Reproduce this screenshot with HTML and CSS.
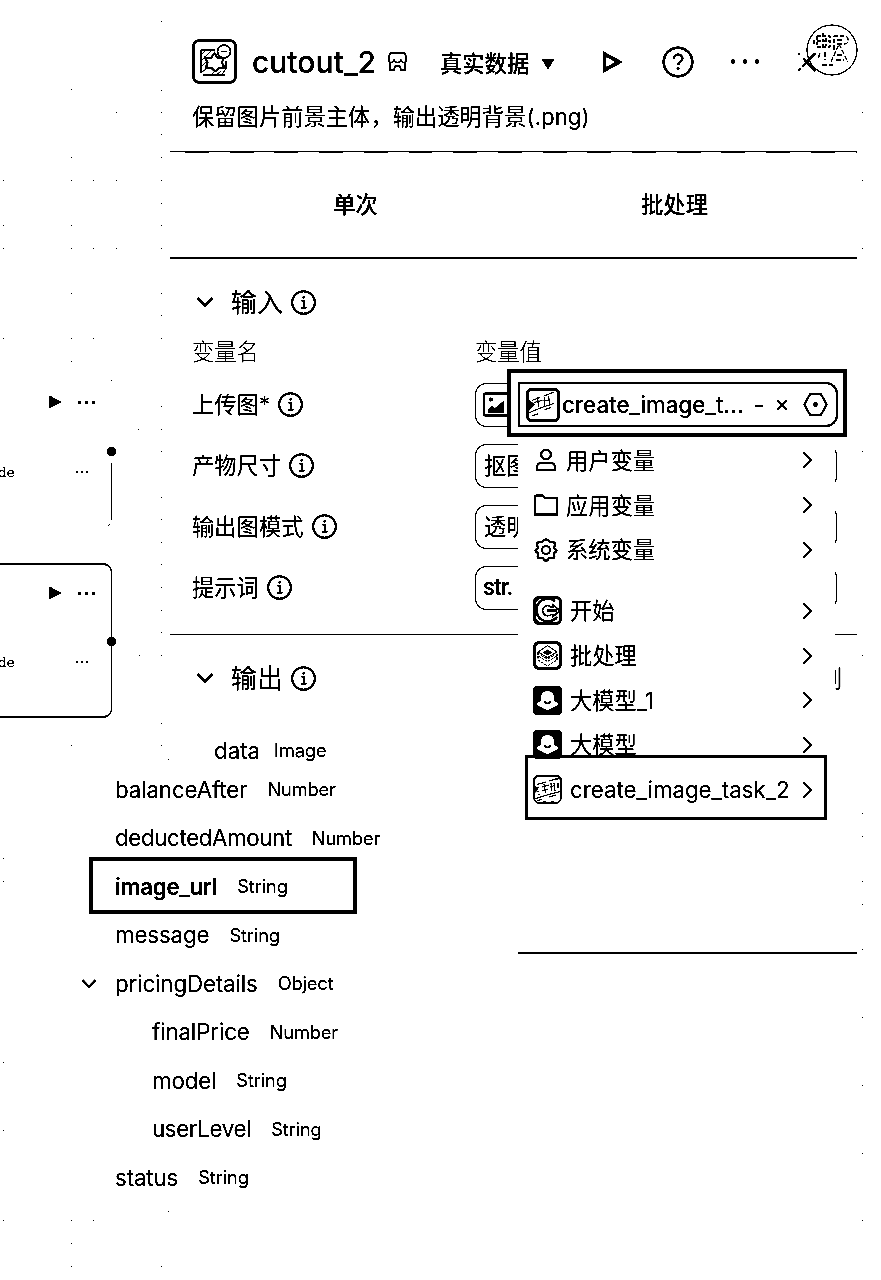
FILE: index.html
```html
<!DOCTYPE html>
<html lang="zh-CN">
<head>
<meta charset="utf-8">
<title>cutout_2</title>
<link rel="stylesheet" href="styles.css">
</head>
<body>
<svg class="defs" width="0" height="0">
  <defs>
    <symbol id="info" viewBox="0 0 24 24"><circle cx="12" cy="12" r="10.9" fill="none" stroke="#000" stroke-width="1.900"/><path d="M9.900 10.400h2.400v6.200M9.600 16.900h5.400" fill="none" stroke="#000" stroke-width="1.500"/><circle cx="12.100" cy="6.900" r="1.200"/></symbol>
    <symbol id="right" viewBox="0 0 10 18"><path d="M1 1.200 8.600 9 1 16.800" fill="none" stroke="#000" stroke-width="1.800"/></symbol>
    <symbol id="down" viewBox="0 0 18 12"><path d="M1.500 2 9 9.600 16.500 2" fill="none" stroke="#000" stroke-width="2.600"/></symbol>
    <symbol id="play" viewBox="0 0 13 14"><path d="M.5.5 12.500 7 .5 13z"/></symbol>
    <symbol id="model" viewBox="0 0 29 29"><rect width="29" height="29" rx="4.500"/><path d="M14.500 5c4.200 0 6.500 3.200 6.500 6.500v3.500c1.700.6 4 1.300 4 3 0 1.800-2.300 3.200-4.500 2.500-.9 2-2.600 2.600-4 2.300-.8 1.600-3.200 1.600-4 0-1.800.3-3.300-.6-4-2.300-2.300.7-4.500-.8-4.500-2.500 0-1.700 2.300-2.400 4-3v-3.500c0-3.300 2.300-6.500 6.500-6.500z" fill="#fff"/><path d="M11.500 15c.8 3.200 5.200 3.200 6 0" fill="none" stroke="#000" stroke-width="1.500"/></symbol>
    <symbol id="task" viewBox="0 0 29 29"><rect x="1" y="1" width="27" height="27" rx="5" fill="#fff" stroke="#000" stroke-width="1.300"/><path d="M1 8V6a5 5 0 0 1 5-5h17a5 5 0 0 1 5 5" fill="none" stroke="#000" stroke-width="2.200"/><path d="M4 9.500 13 7m3-1 10-3M2 23.800 14 20l13-3.500M4 26l5-2M11 9l1.500 9M9 12l7-2M9 16l6-2M18 8l.6 8M17.500 12l5-2M21 8l1 8M3 13l3-1M3.500 17l3-1M5 20l2-1M25 8v5M16 22l7-2M22 5l3-1" fill="none" stroke="#000" stroke-width="1"/><path d="M2 11l3 3-3 4zM10 26h3v1h-3zM18 26h3v1h-3z"/></symbol>
  </defs>
</svg>

<main class="stage">
  <svg class="grid" width="881" height="1280"><path stroke="#000" stroke-width="1" d="M161 21.500h1M71 89.500h1M161 90.500h1M116 112.500h1M161 112.500h1M161 134.500h1M71 157.500h1M161 157.500h1M3 180.500h1M71 180.500h1M93 180.500h1M116 180.500h1M161 180.500h1M161 203.500h1M3 225.500h1M71 225.500h1M161 225.500h1M3 248.500h1M71 248.500h1M93 248.500h1M116 248.500h1M161 248.500h1M71 293.500h1M161 293.500h1M161 315.500h1M3 338.500h1M71 338.500h1M93 338.500h1M161 338.500h1M71 361.500h1M111 380.500h1M161 406.500h1M138 429.500h1M161 429.500h1M161 451.500h1M161 497.500h1M161 519.500h1M161 542.500h1M161 564.500h1M161 587.500h1M161 610.500h1M161 632.500h1M139 655.500h1M161 655.500h1M161 723.500h1M71 745.500h1M161 745.500h1M168 759.500h1M862 112.500h1M862 180.500h1M862 248.500h1M862 451.500h1M862 655.500h1M862 813.500h1M862 836.500h1M862 881.500h1M862 904.500h1M862 949.500h1M862 1017.500h1M862 1085.500h1M862 1153.500h1M862 1220.500h1M3 858.500h1M3 881.500h1M3 1062.500h1M3 1130.500h1M3 1220.500h1M168 1211.500h1M71 1220.500h1M93 1220.500h1M71 1243.500h1M71 1266.500h1M161 1266.500h1M108 525.500h1M109 524.500h1"/></svg>

  <section class="node node-plain">
    <div class="node-head"><svg class="play"><use href="#play"/></svg><i class="dots"><b></b><b></b><b></b></i></div>
    <div class="node-row"><span>de</span><i class="dots small"><b></b><b></b><b></b></i></div>
    <span class="port"></span>
    <span class="edge"></span>
  </section>
  <section class="node node-active">
    <div class="node-head"><svg class="play"><use href="#play"/></svg><i class="dots"><b></b><b></b><b></b></i></div>
    <div class="node-row"><span>de</span><i class="dots small"><b></b><b></b><b></b></i></div>
    <span class="port"></span>
  </section>

  <section class="panel">
    <header class="head">
      <svg class="app" viewBox="0 0 45 45"><rect x="1.500" y="1.500" width="42" height="42" rx="6" fill="#fff" stroke="#000" stroke-width="2.600"/><path d="M9 34V11h14M9 34l6-5M9 28l6-6M9 22l11-11M9 16l4-4M18 37l4-4M23 37l6-5M29 36l6-7M34 22v8M11 36h22" fill="none" stroke="#000" stroke-width=".9"/><path d="m22.500 14 3 5 6-1-1.500 6 2.500 4.500-5.500.5-4 3.500-3.500-3.500-5.500-.500 1.500-5-2.500-5 6 .500z" fill="#fff" stroke="#000" stroke-width="1.900"/><circle cx="32" cy="12.500" r="6.500" fill="#fff" stroke="#000" stroke-width="1.500"/><path d="M29.500 12.500h5" stroke="#000"/></svg>
      <h1>cutout_2</h1>
      <svg class="shop" viewBox="0 0 20 20"><path d="M3 1.200h14l1.800 4v3c0 1.600-1 2.300-2.300 2.300S14 9.600 13.500 8.500C13 9.700 11.500 10.500 10 10.500S7 9.700 6.500 8.500C6 9.600 4.800 10.500 3.500 10.500S1.200 9.800 1.200 8.200v-3zM2.500 11v7.300h4l1-4h5l1 4h4V11" fill="none" stroke="#000" stroke-width="1.600"/></svg>
      <span class="source">真实数据</span>
      <svg class="caret" viewBox="0 0 14 12"><path d="M.5.8h13L7 11.500z"/></svg>
      <svg class="run" viewBox="0 0 20 22"><path d="M2.500 3 17 11 2.500 19z" fill="none" stroke="#000" stroke-width="3.600"/></svg>
      <svg class="help" viewBox="0 0 32 32"><circle cx="16" cy="16" r="14.300" fill="none" stroke="#000" stroke-width="2.500"/><path d="M11.700 12.800c0-5.600 8.800-5.600 8.800-.3 0 3.300-4.400 3.500-4.400 6.800" fill="none" stroke="#000" stroke-width="2.200"/><circle cx="16" cy="22.700" r="1.500"/></svg>
      <i class="dots big"><b></b><b></b><b></b></i>
      <svg class="close" viewBox="0 0 20 20"><path d="M1.500 18.500 19 1" fill="none" stroke="#000" stroke-width="1.600" stroke-dasharray="3.500 2 20"/><path d="M1.500 1.500l1 1M6 6l4 4" stroke="#000" stroke-width="1.500"/><path d="M8 8.500 18.500 19M11 8.500l7.500-7" stroke="#000" stroke-width="2.600"/></svg>
    </header>
    <p class="desc">保留图片前景主体，输出透明背景(.png)</p>
    <nav class="tabs"><span>单次</span><span>批处理</span></nav>

    <div class="block">
      <h2><svg class="fold"><use href="#down"/></svg><span>输入</span><svg class="info"><use href="#info"/></svg></h2>
      <div class="cols"><span>变量名</span><span>变量值</span></div>
      <div class="row"><label><span>上传图*</span><svg class="info"><use href="#info"/></svg></label><div class="field"><svg class="pic" viewBox="0 0 27 25"><rect x="1" y="1.500" width="25" height="22" rx="1" fill="none" stroke="#000" stroke-width="2"/><circle cx="7.800" cy="7.500" r="2.100"/><path d="M5 20.500V18l4-4 3 2 9-7.500v12z"/></svg></div></div>
      <div class="row"><label><span>产物尺寸</span><svg class="info"><use href="#info"/></svg></label><div class="field"><span>抠图</span></div></div>
      <div class="row"><label><span>输出图模式</span><svg class="info"><use href="#info"/></svg></label><div class="field"><span>透明</span></div></div>
      <div class="row"><label><span>提示词</span><svg class="info"><use href="#info"/></svg></label><div class="field str">str.</div></div>
    </div>

    <div class="block out">
      <h2><svg class="fold"><use href="#down"/></svg><span>输出</span><svg class="info"><use href="#info"/></svg><span class="tail">列</span></h2>
      <div class="data"><span>data</span><em>Image</em></div>
    </div>
  </section>

  <svg class="avatar" viewBox="0 0 52 52"><circle cx="26" cy="26" r="25" fill="none" stroke="#000" stroke-width="1.100"/><path d="M11 12h13v11H11zM11 17h13M17 9v17M20 14v8M8 16v6" fill="none" stroke="#000" stroke-width="1.100" stroke-dasharray="4 1.500"/><path d="M28 26V12h11c4 0 4 8 0 8h-8M31 16h7M25 38l8-18 9 18M31 31h6M30 36h8M14 29l-2 6M19 28v8M16 41h12" fill="none" stroke="#000" stroke-width="1.100" stroke-dasharray="5 1.500"/></svg>

  <aside class="tree">
    <div><span>balanceAfter</span><em>Number</em></div>
    <div><span class="tight">deductedAmount</span><em>Number</em></div>
    <div class="picked"><span>image_url</span><em>String</em></div>
    <div><span>message</span><em>String</em></div>
    <div class="parent"><svg class="fold"><use href="#down"/></svg><span>pricingDetails</span><em>Object</em></div>
    <div class="sub"><span>finalPrice</span><em>Number</em></div>
    <div class="sub"><span>model</span><em>String</em></div>
    <div class="sub"><span class="tight">userLevel</span><em>String</em></div>
    <div><span>status</span><em>String</em></div>
  </aside>

  <aside class="menu">
    <ul>
      <li><svg class="ic" viewBox="0 0 24 24"><circle cx="12" cy="6.500" r="4.800" fill="none" stroke="#000" stroke-width="2.100"/><path d="M3 22v-3c0-2.500 2-4 4-4h10c2 0 4 1.500 4 4v3z" fill="none" stroke="#000" stroke-width="2.100"/></svg><span>用户变量</span><svg class="go"><use href="#right"/></svg></li>
      <li><svg class="ic" viewBox="0 0 24 24"><path d="M1.200 21.500v-18q0-1 1-1h6.600l2.200 2.400h11q1 0 1 1v15.600z" fill="none" stroke="#000" stroke-width="2.100"/></svg><span>应用变量</span><svg class="go"><use href="#right"/></svg></li>
      <li><svg class="ic" viewBox="0 0 24 24"><path d="M12 1.200c1.700 0 2.700 2.300 4 2.800 1.500.6 4-.4 4.800 1 .9 1.500-.7 3.200-.7 4.700 0 1 2.500 1.500 2.500 2.800s-2.200 1.800-2.500 3c-.3 1.500 1.200 3-.2 4.200-1.200 1-3.200-.2-4.500.4-1.200.6-1.700 2.700-3.400 2.700s-2.200-2.100-3.400-2.700c-1.300-.6-3.300.6-4.500-.4-1.400-1.200.1-2.700-.2-4.200-.3-1.200-2.500-1.700-2.500-3s2.500-1.800 2.500-2.800c0-1.500-1.600-3.200-.7-4.700.8-1.400 3.300-.4 4.800-1 1.300-.5 2.300-2.800 4-2.800z" fill="none" stroke="#000" stroke-width="2"/><circle cx="12" cy="12" r="4" fill="none" stroke="#000" stroke-width="2"/></svg><span>系统变量</span><svg class="go"><use href="#right"/></svg></li>
    </ul>
    <ul class="nodes">
      <li><svg class="ic" viewBox="0 0 29 29"><rect x="1.500" y="1.500" width="26" height="26" rx="4.500" fill="#fff" stroke="#000" stroke-width="3"/><path d="M22 5a11.500 11.500 0 1 0 2 16" fill="none" stroke="#000" stroke-width="2.400"/><path d="M18 11a5 5 0 1 0 0 7.500h2v2l7-5.800L20 9v2z" fill="#fff" stroke="#000" stroke-width="1.600"/><path d="M14 13.500h10v2H14zM1 20l5 6H2zM2 3h4L2 8z"/></svg><span>开始</span><svg class="go"><use href="#right"/></svg></li>
      <li><svg class="ic" viewBox="0 0 29 29"><rect x="1.500" y="1.500" width="26" height="26" rx="5" fill="#fff" stroke="#000" stroke-width="3"/><path d="m14.500 4.500 9.500 6.500-9.500 5.500L5 11z" fill="none" stroke="#000" stroke-width="1"/><path d="m14.500 8.500 5 3-5 2.500-5-2.500z"/><path d="M5 11v8l9.500 6 9.500-6v-8M5 15l9.500 5.500L24 15M8 14.500l6.500 3.500 6.500-3.500" fill="none" stroke="#000" stroke-width=".9" stroke-dasharray="3 .8"/></svg><span>批处理</span><svg class="go"><use href="#right"/></svg></li>
      <li><svg class="ic"><use href="#model"/></svg><span>大模型_1</span><svg class="go"><use href="#right"/></svg></li>
      <li><svg class="ic"><use href="#model"/></svg><span>大模型</span><svg class="go"><use href="#right"/></svg></li>
      <li><svg class="ic"><use href="#task"/></svg><span class="lat">create_image_task_2</span><svg class="go"><use href="#right"/></svg></li>
    </ul>
  </aside>

  <div class="frame frame-value">
    <div class="value">
      <svg class="thumb" viewBox="0 0 33 33"><rect x="1.500" y="1.500" width="30" height="30" rx="4" fill="#fff" stroke="#000" stroke-width="3"/><rect x="6" y="3" width="22" height="27" rx="2" fill="#fff"/><path d="M6 12l8-3M17 8l10-4M3 24l12-5 12-4M11 9l1.500 10M8 14l8-2M18 9v8M17 12h6M22 8l1 9M6 27l6-2M18 21l6-2" fill="none" stroke="#000" stroke-width=".9"/><path d="M3 12l6 4-6 6z"/></svg>
      <span>create_image_t...</span><span class="dash">-</span>
      <svg class="x" viewBox="0 0 12 12"><path d="m1 1 10 10M11 1 1 11" stroke="#000" stroke-width="1.400"/></svg>
      <svg class="hex" viewBox="0 0 25 23"><path d="M7 1.200h11l5.700 10.300L18 21.800H7L1.300 11.500z" fill="none" stroke="#000" stroke-width="1.900" stroke-linejoin="round"/><circle cx="12.500" cy="11.500" r="2.200"/></svg>
    </div>
  </div>
  <div class="frame frame-menu"></div>
  <div class="frame frame-tree"></div>
</main>
</body>
</html>
```
FILE: styles.css
```css
* { box-sizing: border-box; }
body { margin: 0; background: #fff; color: #000; font: 22.3px "Inter", "Noto Sans CJK SC", sans-serif; }
svg { display: block; flex: none; }
h1, h2, p, ul { margin: 0; padding: 0; font-weight: 400; }
ul { list-style: none; }
em, i { font-style: normal; }
.defs { position: absolute; }
.stage { position: relative; width: 881px; height: 1280px; overflow: hidden; background: #fff; filter: brightness(.8) contrast(12); }
.grid { position: absolute; inset: 0; }

.dots { display: flex; gap: 4px; }
.dots b { width: 3px; height: 3px; border-radius: 50%; background: #000; }
.dots.small { gap: 3px; }
.dots.small b { width: 2px; height: 2px; }
.dots.big { gap: 7.500px; }
.dots.big b { width: 4.300px; height: 4.300px; }

.node { position: absolute; left: -20px; width: 132px; height: 155px; }
.node-plain { top: 372px; }
.node-active { top: 563px; border: solid #000; border-width: 2px 1px 2px 0; border-radius: 0 9px 9px 0; }
.node-head { display: flex; align-items: center; gap: 16px; height: 60px; padding-left: 69px; }
.node-active .node-head { height: 56px; }
.play { width: 13px; height: 14px; }
.node-row { display: flex; align-items: center; justify-content: space-between; height: 80px; padding: 0 24px 0 18px; font: 13.500px "DejaVu Serif", serif; }
.node-active .node-row { padding-right: 23px; height: 81px; }
.port { position: absolute; right: -4px; top: 75px; width: 9px; height: 9px; border-radius: 50%; background: #000; }
.node-active .port { right: -5px; top: 72px; }
.edge { position: absolute; right: 0; top: 91px; width: 1px; height: 57px; background: #000; }

.panel { position: absolute; left: 170px; top: 0; width: 687px; height: 954px; padding-top: 30px; border-bottom: 2px solid #000; }
.head { display: flex; align-items: center; height: 64px; padding-left: 22px; }
.app { width: 45px; height: 45px; margin-top: -2px; }
.head h1 { width: 150px; flex: none; padding-left: 15px; font-size: 30px; font-weight: 500; line-height: 60px; white-space: nowrap; }
.shop { width: 21px; height: 20px; }
.source { width: 101px; margin-left: 32px; font-weight: 500; white-space: nowrap; }
.caret { width: 14px; height: 12px; margin-top: 4px; }
.run { width: 20px; height: 22px; margin: -1px 0 0 47px; }
.help { width: 32px; height: 32px; margin: -1px 0 0 40px; }
.dots.big { margin: -1px 0 0 37px; }
.close { width: 20px; height: 20px; margin-left: 38px; }
.desc { height: 58px; padding-left: 22px; line-height: 46px; border-bottom: 1px solid #000; }
.tabs { display: grid; grid-template-columns: 371px 267px; align-items: center; height: 107px; padding-bottom: 4px; border-bottom: 2px solid #000; text-align: center; font-weight: 500; background: repeating-linear-gradient(90deg, #fff 0 15px, #000 15px 39px, #fff 39px 44.700px) 0 0 / 100% 1px no-repeat; }

.block { height: 376px; padding-top: 13px; border-bottom: 1px solid #000; }
.out { border: 0; height: auto; }
.block h2 { display: flex; align-items: center; height: 60px; padding-left: 26px; font-size: 26px; }
.block h2 span { margin-top: -3px; }
.fold { width: 18px; height: 12px; margin-right: 17px; }
.info { width: 25px; height: 25px; margin-left: 8px; }
.block h2 .tail { margin-left: auto; margin-right: 15px; font-size: 22.300px; }
.cols, .row { display: grid; grid-template-columns: 283px 362px; padding-left: 22px; }
.cols { height: 42px; line-height: 40px; font-weight: 300; }
.row { height: 61px; align-items: center; }
.row label { display: flex; align-items: center; }
.row label span, .field span { margin-top: -4px; }
.field { display: flex; align-items: center; height: 44px; padding-left: 8px; border: 1px solid #000; border-radius: 11px; }
.field.str { padding-left: 7px; font: 500 23px "Roboto", sans-serif; letter-spacing: -.8px; }
.pic { width: 27px; height: 25px; margin-left: -1px; }
.data { display: flex; align-items: center; height: 84px; padding-left: 44px; gap: 14px; }
.data em, .tree em { font-size: 18.200px; letter-spacing: -.1px; }

.avatar { position: absolute; left: 806px; top: 24px; width: 52px; height: 52px; }

.tree { position: absolute; left: 72px; top: 765px; width: 446px; height: 445px; background: #fff; }
.tree div { display: flex; align-items: center; height: 48.500px; padding-left: 43px; gap: 20px; white-space: nowrap; letter-spacing: -.12px; }
.tree .tight { letter-spacing: -.36px; }
.tree .sub { padding-left: 80px; }
.tree .parent { padding-left: 9px; }
.tree .fold { width: 16px; height: 11px; margin-right: -2px; }
.tree .picked span { font-weight: 600; letter-spacing: -.3px; }

.menu { position: absolute; left: 518px; top: 438px; width: 317px; height: 380px; background: #fff; }
.menu li { display: flex; align-items: center; height: 44.700px; padding: 0 22px 0 16px; white-space: nowrap; }
.menu span { flex: 1; padding: 0 0 3px 8px; }
.menu .lat { padding-bottom: 0; }
.menu .ic { width: 24px; height: 24px; }
.nodes { margin-top: 16.500px; }
.menu .nodes li { padding-left: 15px; }
.menu .nodes .ic { width: 29px; height: 29px; }
.go { width: 11px; height: 18px; }

.frame { position: absolute; border: 3.500px solid #000; }
.frame-value { left: 507px; top: 369px; width: 340px; height: 68px; padding: 9px 5px 6px 7px; border-width: 4px; background: #fff; }
.value { display: flex; align-items: center; height: 45px; padding-left: 6px; border: 2px solid #000; border-radius: 0 12px 12px 0; white-space: nowrap; }
.thumb { width: 34px; height: 34px; margin-right: 2px; }
.value span { width: 192px; font-weight: 500; }
.value .dash { width: 22px; }
.x { width: 12px; height: 12px; margin-right: 15px; }
.hex { width: 25px; height: 23px; }
.frame-menu { left: 525px; top: 755px; width: 302px; height: 65px; }
.frame-tree { left: 89px; top: 857px; width: 268px; height: 57px; border-width: 4px; }
```
